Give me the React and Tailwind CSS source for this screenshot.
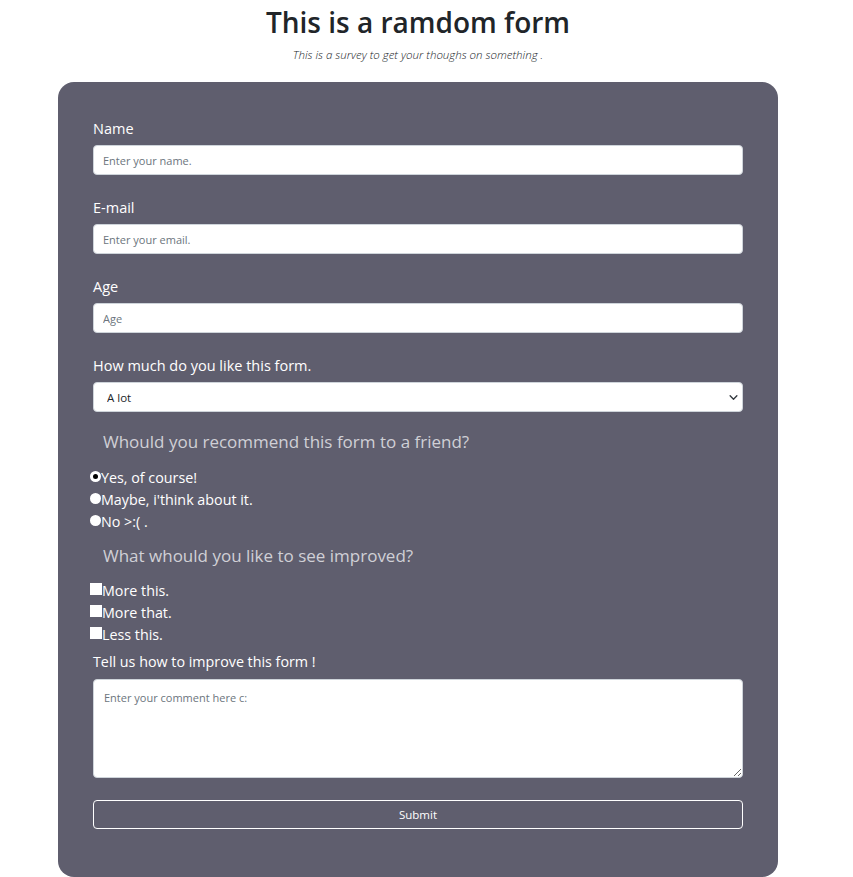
import { useState } from 'react';

const font = { fontFamily: '"Open Sans", "Liberation Sans", sans-serif' };

const TextField = ({ label, placeholder, type = 'text' }) => (
  <div className="mb-[23px]">
    <label className="block text-[14.5px] leading-[20px] mb-[6px] text-white">{label}</label>
    <input
      type={type}
      placeholder={placeholder}
      className="block w-full h-[30px] rounded-[4px] bg-white border border-[#ced4da] px-[9px] text-[11px] text-[#212529] placeholder:text-[#6c757d] outline-none"
    />
  </div>
);

const Radio = ({ checked, label, onClick }) => (
  <label className="flex items-center h-[22px] cursor-pointer" onClick={onClick}>
    <span className="w-[11px] h-[11px] rounded-full bg-white flex items-center justify-center mt-[-2px]">
      {checked && <span className="w-[5px] h-[5px] rounded-full bg-black" />}
    </span>
    <span className="text-[14.3px] text-white">{label}</span>
  </label>
);

const Check = ({ checked, label, onClick }) => (
  <label className="flex items-center h-[22px] cursor-pointer" onClick={onClick}>
    <span className="w-[12px] h-[12px] bg-white mt-[-3px] flex items-center justify-center text-[9px] leading-none">
      {checked ? '✓' : ''}
    </span>
    <span className="text-[14.3px] text-white">{label}</span>
  </label>
);

export default function App() {
  const [recommend, setRecommend] = useState('yes');
  const [improve, setImprove] = useState({});

  const toggle = (k) => setImprove((s) => ({ ...s, [k]: !s[k] }));

  return (
    <div className="min-h-screen bg-white w-[836px]" style={font}>
      <header className="text-center pt-[2px]">
        <h1 className="text-[28px] leading-[40px] font-semibold text-[#212529]">This is a ramdom form</h1>
        <p className="text-[11.5px] italic text-[#212529] mt-[4px] font-light">
          This is a survey to get your thoughs on something .
        </p>
      </header>

      <form className="w-[720px] mx-auto mt-[19px] bg-[#5f5e6e] rounded-[16px] px-[35px] pt-[37px] pb-[48px]">
        <TextField label="Name" placeholder="Enter your name." />
        <TextField label="E-mail" placeholder="Enter your email." type="email" />
        <TextField label="Age" placeholder="Age" type="number" />

        <div>
          <label className="block text-[14.5px] leading-[20px] mb-[6px] text-white">How much do you like this form.</label>
          <div className="relative">
            <select className="block w-full h-[30px] appearance-none rounded-[4px] bg-white border border-[#ced4da] pl-[13px] text-[11.5px] text-[#212529] outline-none">
              <option>A lot</option>
              <option>Somewhat</option>
              <option>Not at all</option>
            </select>
            <svg className="absolute right-[5px] top-[12px] pointer-events-none" width="9" height="7" viewBox="0 0 16 12">
              <path d="M2 3l6 6 6-6" fill="none" stroke="#343a40" strokeWidth="2.4" strokeLinecap="round" strokeLinejoin="round" />
            </svg>
          </div>
        </div>

        <h2 className="text-[17px] text-[#d0d0d6] mt-[18px] ml-[10px] leading-[24px]">
          Whould you recommend this form to a friend?
        </h2>
        <div className="mt-[12px] ml-[-3px]">
          <Radio checked={recommend === 'yes'} label="Yes, of course!" onClick={() => setRecommend('yes')} />
          <Radio checked={recommend === 'maybe'} label="Maybe, i'think about it." onClick={() => setRecommend('maybe')} />
          <Radio checked={recommend === 'no'} label="No >:( ." onClick={() => setRecommend('no')} />
        </div>

        <h2 className="text-[17px] text-[#d0d0d6] mt-[12px] ml-[10px] leading-[24px]">
          What whould you like to see improved?
        </h2>
        <div className="mt-[11px] ml-[-3px]">
          <Check checked={improve.a} label="More this." onClick={() => toggle('a')} />
          <Check checked={improve.b} label="More that." onClick={() => toggle('b')} />
          <Check checked={improve.c} label="Less this." onClick={() => toggle('c')} />
        </div>

        <label className="block text-[14.3px] leading-[20px] text-white mt-[7px] mb-[7px]">Tell us how to improve this form !</label>
        <textarea
          placeholder="Enter your comment here c:"
          className="block w-full h-[99px] rounded-[4px] bg-white border border-[#ced4da] px-[10px] py-[10px] text-[11px] text-[#212529] placeholder:text-[#6c757d] outline-none"
        />

        <button
          type="submit"
          className="block w-full h-[29px] mt-[22px] rounded-[4px] border border-white text-white text-[11.5px]"
        >
          Submit
        </button>
      </form>
    </div>
  );
}
